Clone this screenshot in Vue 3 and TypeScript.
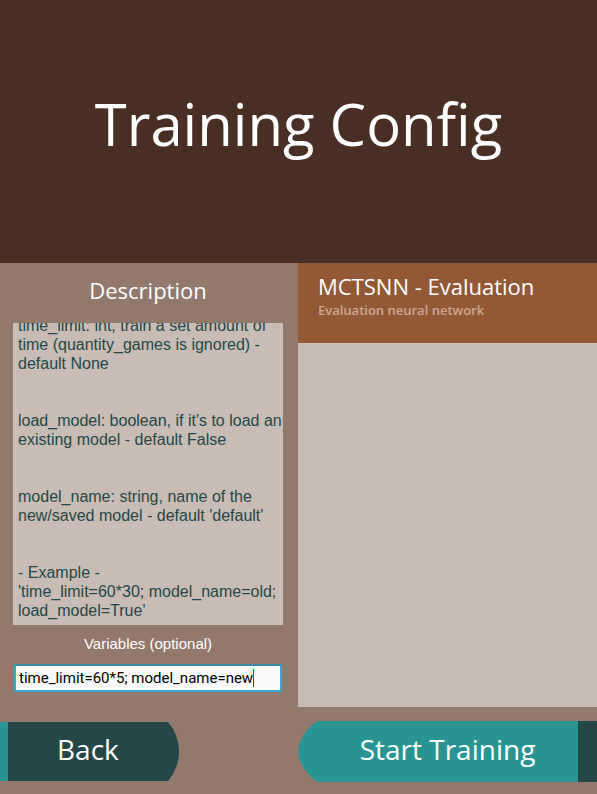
<script setup lang="ts">
import { ref } from 'vue'

interface Option {
  id: string
  title: string
  subtitle: string
}

const options: Option[] = [
  { id: 'mctsnn-eval', title: 'MCTSNN - Evaluation', subtitle: 'Evaluation neural network' },
]

const selected = ref<string>(options[0].id)
const variables = ref<string>('time_limit=60*5; model_name=new')

const description: string[] = [
  'time_limit: int, train a set amount of time (quantity_games is ignored) - default None',
  "load_model: boolean, if it's to load an existing model - default False",
  "model_name: string, name of the new/saved model - default 'default'",
  "- Example -\n'time_limit=60*30; model_name=old; load_model=True'",
]
</script>

<template>
  <div class="screen">
    <header class="header">
      <h1>Training Config</h1>
    </header>

    <main class="main">
      <section class="details">
        <h2>Description</h2>
        <div class="description">
          <p v-for="text in description" :key="text">{{ text }}</p>
        </div>
        <label class="label" for="variables">Variables (optional)</label>
        <div class="field">
          <input id="variables" v-model="variables" type="text" spellcheck="false" autocomplete="off" />
          <span class="caret"></span>
        </div>
      </section>

      <section class="list">
        <button
          v-for="option in options"
          :key="option.id"
          type="button"
          class="option"
          :class="{ active: option.id === selected }"
          @click="selected = option.id"
        >
          <span class="option-title">{{ option.title }}</span>
          <span class="option-subtitle">{{ option.subtitle }}</span>
        </button>
      </section>
    </main>

    <footer class="footer">
      <div class="cell">
        <button type="button" class="action back">
          <span class="face">Back</span>
          <svg class="cap" width="11" height="59" viewBox="0 0 11 59" aria-hidden="true">
            <path d="M0 0A45 45 0 0 1 0 59Z" fill="#234847" />
          </svg>
        </button>
      </div>
      <div class="cell">
        <button type="button" class="action start">
          <svg class="cap" width="19" height="61" viewBox="0 0 19 61" aria-hidden="true">
            <path d="M19 0C-6 20 -6 41 19 61Z" fill="#299494" />
          </svg>
          <span class="face">Start Training</span>
        </button>
      </div>
    </footer>
  </div>
</template>

<style>
body {
  margin: 0;
  background: #92796c;
}
</style>

<style scoped>
.screen {
  display: grid;
  grid-template-rows: 263fr minmax(0, 444fr) 87fr;
  height: 100vh;
  background: #92796c;
  color: #fff;
  font-family: 'Open Sans', 'Noto Sans', sans-serif;
}

h1,
h2,
p {
  margin: 0;
  font-weight: 400;
}

button {
  border: 0;
  padding: 0;
  color: inherit;
  font: inherit;
  cursor: pointer;
}

.header {
  display: flex;
  align-items: center;
  justify-content: center;
  background: #482e23;
}

.header h1 {
  padding-bottom: 16px;
  font-size: 58px;
  line-height: 80px;
}

.main,
.footer {
  display: grid;
  grid-template-columns: 298fr 299fr;
}

.main {
  min-height: 0;
}

.details {
  display: flex;
  flex-direction: column;
  min-width: 0;
  min-height: 0;
  padding: 0 15px 15px 13px;
}

.details h2 {
  font-size: 22px;
  line-height: 54px;
  padding-bottom: 6px;
  text-align: center;
}

.description {
  display: flex;
  flex: 1;
  flex-direction: column;
  justify-content: flex-end;
  gap: 38px;
  min-height: 0;
  overflow: hidden;
  padding: 0 0 5px 5px;
  background: #c9bcb4;
  color: #234847;
  font-family: 'Liberation Sans', sans-serif;
  font-size: 16px;
  line-height: 19px;
  white-space: pre-line;
}

.description p {
  flex-shrink: 0;
}

.label {
  padding-bottom: 1px;
  font-family: 'Liberation Sans', sans-serif;
  font-size: 15px;
  line-height: 38px;
  text-align: center;
}

.field {
  display: flex;
  align-items: center;
  height: 24px;
  margin: 0 1px;
  padding: 0 3px;
  border: 2px solid #38a9cf;
  border-top-color: #3c8ea8;
  background: #fafafa;
}

.field input {
  min-width: 0;
  border: 0;
  padding: 0;
  outline: 0;
  background: transparent;
  color: #000;
  caret-color: transparent;
  font-family: Roboto, sans-serif;
  font-size: 15px;
  line-height: 18px;
  field-sizing: content;
}

.caret {
  flex: none;
  width: 1px;
  height: 18px;
  background: #f00;
}

.list {
  min-width: 0;
  background: #c9bcb4;
}

.option {
  display: flex;
  flex-direction: column;
  width: 100%;
  height: 80px;
  padding: 8px 20px;
  background: #c9bcb4;
  text-align: left;
}

.option.active {
  background: #935937;
}

.option-title {
  font-size: 22px;
  line-height: 30px;
}

.option-subtitle {
  color: #c9a793;
  font-size: 13px;
  font-weight: 600;
  line-height: 18px;
}

.footer {
  align-items: center;
  padding-top: 2px;
}

.action {
  display: flex;
  background: transparent;
  font-size: 28px;
}

.cap {
  display: block;
  flex: none;
}

.face {
  box-sizing: border-box;
  padding-bottom: 4px;
  text-align: center;
}

.back {
  width: 60%;
}

.back .face {
  flex: 1;
  border-left: 8px solid #299494;
  background: #234847;
  line-height: 55px;
}

.start {
  width: 100%;
}

.start .face {
  flex: 1;
  border-right: 19px solid #234847;
  background: #299494;
  line-height: 57px;
}
</style>
